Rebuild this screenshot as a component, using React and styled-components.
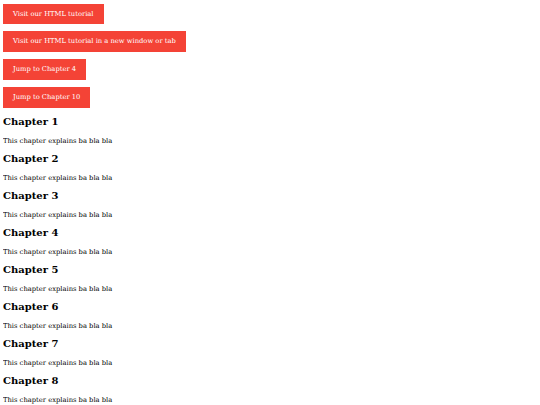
import React from "react";
import styled, { createGlobalStyle } from "styled-components";

const GlobalStyle = createGlobalStyle`
    body {
        margin: 3px;
        font-family: "DejaVu Serif", serif;
        color: #000;
        background: #fff;
    }
`;

const LinkList = styled.div`
    display: flex;
    flex-direction: column;
    align-items: flex-start;
    gap: 7px;
    padding-top: 0.5px;
    margin-bottom: 1.5px;
`;

const LinkButton = styled.a`
    display: inline-block;
    background-color: #f44336;
    color: #fff;
    padding: 6px 10px;
    font-size: 6.75px;
    line-height: 8.8px;
    text-align: center;
    text-decoration: none;
    cursor: pointer;
`;

const Chapter = styled.h2`
    font-size: 10px;
    line-height: 12px;
    font-weight: bold;
    margin: 8.5px 0;
`;

const ChapterText = styled.p`
    font-size: 6.75px;
    line-height: 8px;
    margin: 8.5px 0;
`;

const chapters = [1, 2, 3, 4, 5, 6, 7, 8, 9, 10];

function App() {
    return (
        <>
            <GlobalStyle />
            <LinkList>
                <LinkButton href="#">Visit our HTML tutorial</LinkButton>
                <LinkButton href="#" target="_blank">
                    Visit our HTML tutorial in a new window or tab
                </LinkButton>
                <LinkButton href="#C4">Jump to Chapter 4</LinkButton>
                <LinkButton href="#C10">Jump to Chapter 10</LinkButton>
            </LinkList>
            {chapters.map((n) => (
                <section key={n}>
                    <Chapter id={`C${n}`}>Chapter {n}</Chapter>
                    <ChapterText>This chapter explains ba bla bla</ChapterText>
                </section>
            ))}
        </>
    );
}

export default App;
